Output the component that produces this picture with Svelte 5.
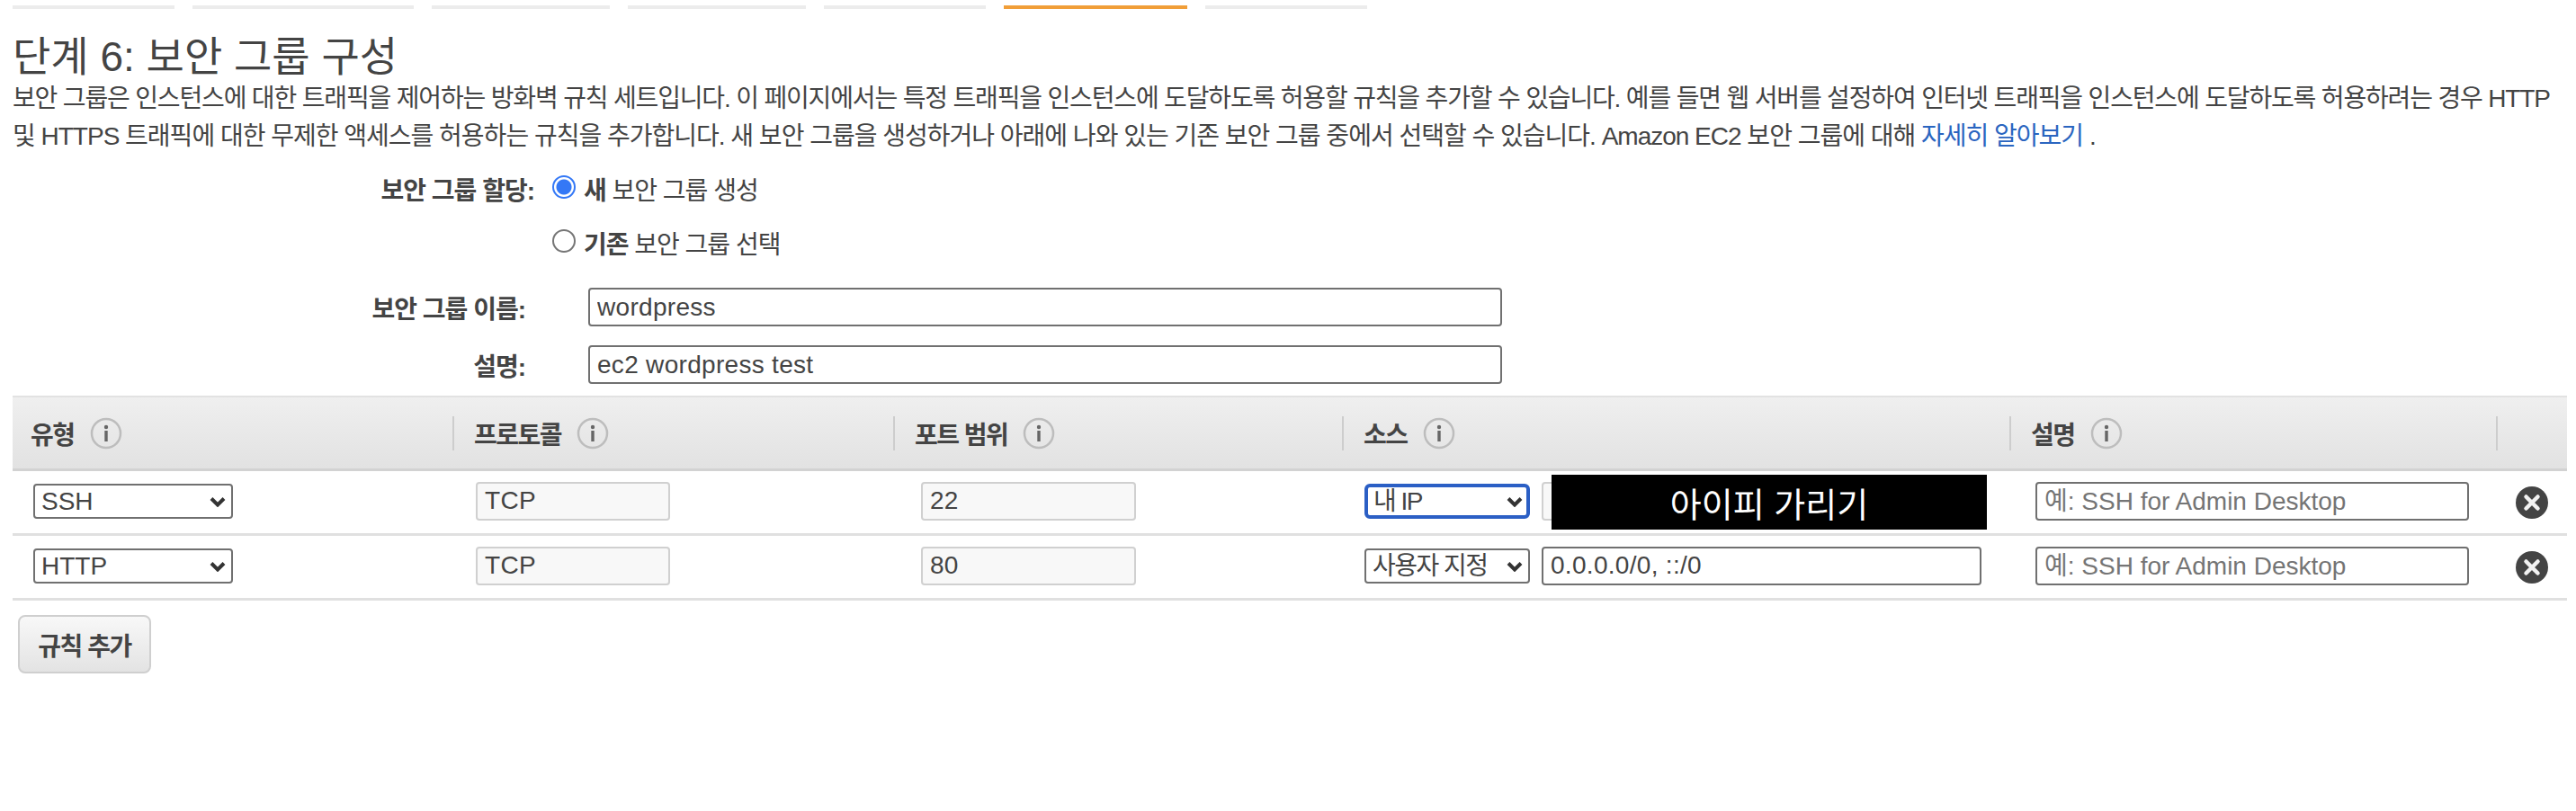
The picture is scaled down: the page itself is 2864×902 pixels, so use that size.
<script>
const steps = [
  { width: 180 }, { width: 246 }, { width: 198 }, { width: 198 },
  { width: 180 }, { width: 204, active: true }, { width: 180 }
];
const columns = ["유형", "프로토콜", "포트 범위", "소스", "설명"];
const rules = [
  { type: "SSH", port: "22", source: "내 IP", focused: true, hidden: true, cidr: "1" },
  { type: "HTTP", port: "80", source: "사용자 지정", cidr: "0.0.0.0/0, ::/0" }
];
const types = ["SSH", "HTTP", "HTTPS"];
const sources = ["사용자 지정", "내 IP", "위치 무관"];
</script>

<main class="page">
  <div class="steps">
    {#each steps as step}
      <span class="step {step.active ? 'step--active' : ''}" style="width: {step.width}px"></span>
    {/each}
  </div>

  <h1>단계 6: 보안 그룹 구성</h1>
  <p class="intro">
    <span class="intro-first">보안 그룹은 인스턴스에 대한 트래픽을 제어하는 방화벽 규칙 세트입니다. 이 페이지에서는 특정 트래픽을 인스턴스에 도달하도록 허용할 규칙을 추가할 수 있습니다. 예를 들면 웹 서버를 설정하여 인터넷 트래픽을 인스턴스에 도달하도록 허용하려는 경우 HTTP</span><br />
    및 HTTPS 트래픽에 대한 무제한 액세스를 허용하는 규칙을 추가합니다. 새 보안 그룹을 생성하거나 아래에 나와 있는 기존 보안 그룹 중에서 선택할 수 있습니다. Amazon EC2 보안 그룹에 대해 <a href="#learn">자세히 알아보기</a> .
  </p>

  <div class="assign">
    <span class="label">보안 그룹 할당:</span>
    <label class="choice"><input type="radio" name="sg" checked /><span><b>새</b> 보안 그룹 생성</span></label>
    <span></span>
    <label class="choice"><input type="radio" name="sg" /><span><b>기존</b> 보안 그룹 선택</span></label>
  </div>

  <div class="fields">
    <span class="label">보안 그룹 이름:</span>
    <input class="text" value="wordpress" />
    <span class="label">설명:</span>
    <input class="text" value="ec2 wordpress test" />
  </div>

  <div class="table">
    <div class="row row--head">
      {#each columns as name, idx}
        <div class="th">
          <div class="th-inner {idx === 0 ? 'th-inner--first' : ''}">
            <span>{name}</span>
            <svg class="info" viewBox="0 0 36 36" width="36" height="36" aria-hidden="true">
              <circle cx="18" cy="18" r="16" fill="none" stroke="#bdbdbd" stroke-width="2.500" />
              <circle cx="18" cy="11" r="2.200" fill="#666" />
              <rect x="16.300" y="15" width="3.400" height="12" fill="#666" />
            </svg>
          </div>
        </div>
      {/each}
      <div class="th"><div class="th-inner"></div></div>
    </div>

    {#each rules as rule}
      <div class="row">
        <div class="td c-type">
          <span class="select-wrap select-wrap--type">
            <select class="select" value={rule.type}>
              {#each types as t}<option>{t}</option>{/each}
            </select>
            <svg class="chevron" viewBox="0 0 18 12" width="18" height="12" aria-hidden="true"><path d="M2 2.5l7 7 7-7" fill="none" stroke="#333" stroke-width="4" /></svg>
          </span>
        </div>
        <div class="td c-proto"><input class="text text--off text--proto" value="TCP" readonly /></div>
        <div class="td c-port"><input class="text text--off text--port" value={rule.port} readonly /></div>
        <div class="td c-source">
          <span class="select-wrap select-wrap--source">
            <select class="select select--ko {rule.focused ? 'select--focus' : ''}" value={rule.source}>
              {#each sources as s}<option>{s}</option>{/each}
            </select>
            <svg class="chevron" viewBox="0 0 18 12" width="18" height="12" aria-hidden="true"><path d="M2 2.5l7 7 7-7" fill="none" stroke="#333" stroke-width="4" /></svg>
          </span>
          <input class="text text--cidr {rule.hidden ? 'text--off' : ''}" value={rule.cidr} />
          {#if rule.hidden}
            <div class="redact">아이피 가리기</div>
          {/if}
        </div>
        <div class="td c-desc"><input class="text text--desc" placeholder="예: SSH for Admin Desktop" /></div>
        <div class="td c-remove">
          <svg viewBox="0 0 36 36" width="36" height="36" aria-hidden="true">
            <circle cx="18" cy="18" r="18" fill="#444" />
            <path d="M11.5 11.5l13 13M24.500 11.500l-13 13" stroke="#f2f2f2" stroke-width="4.500" stroke-linecap="round" />
          </svg>
        </div>
      </div>
    {/each}
  </div>

  <button class="add">규칙 추가</button>
</main>

<style>
:global(body) {
  margin: 0;
  background: #fff;
}

.page {
  width: 2864px;
  height: 902px;
  padding: 6px 10px 0 14px;
  box-sizing: border-box;
  font-family: "Liberation Sans", "Noto Sans CJK KR", sans-serif;
  font-size: 28px;
  letter-spacing: -1px;
  color: #444;
}

.steps {
  display: flex;
  gap: 20px;
}

.step {
  height: 4px;
  background: #ececec;
}

.step--active {
  background: #f19e38;
}

h1 {
  margin: 32px 0 5px;
  font-size: 46px;
  line-height: 42px;
  font-weight: 400;
  letter-spacing: 0;
  color: #444;
}

.intro {
  margin: 0;
  font-size: 28px;
  line-height: 42px;
  white-space: nowrap;
}

.intro-first {
  letter-spacing: -1.16px;
}

.intro a {
  color: #2a65c0;
  text-decoration: none;
}

.label {
  font-weight: 700;
  text-align: right;
}

.assign {
  display: grid;
  grid-template-columns: 580px auto;
  grid-auto-rows: 60px;
  column-gap: 20px;
  margin-top: 7px;
  align-items: center;
  justify-content: start;
}

.choice {
  display: flex;
  align-items: center;
  gap: 9px;
}

.choice input {
  appearance: none;
  width: 26px;
  height: 26px;
  margin: 0 0 4px;
  border: 2px solid #767676;
  border-radius: 50%;
  background: #fff;
  box-sizing: border-box;
}

.choice input:checked {
  border-color: #3478f6;
  background: radial-gradient(circle, #3478f6 0 8px, #fff 9px);
}

.fields {
  display: grid;
  grid-template-columns: 570px 1016px;
  column-gap: 70px;
  row-gap: 21px;
  margin-top: 20px;
  align-items: center;
}

.text {
  height: 43px;
  padding: 0 8px;
  box-sizing: border-box;
  border: 2px solid #707070;
  border-radius: 4px;
  background: #fff;
  color: #444;
  font: inherit;
  letter-spacing: 0.3px;
  outline: none;
}

.text--off {
  background: #f8f8f8;
  border-color: #d0d0d0;
}

.text::placeholder {
  color: #757575;
  opacity: 1;
  letter-spacing: 0;
}

.text--proto { width: 216px; }
.text--port { width: 239px; }
.text--cidr { width: 489px; }
.text--desc { width: 482px; padding-top: 2px; }

.table {
  margin-top: 13px;
}

.row {
  display: grid;
  grid-template-columns: 489px 490px 499px 742px 541px 79px;
  height: 72px;
  padding-bottom: 3px;
  box-sizing: border-box;
  border-bottom: 3px solid #e0e0e0;
  align-items: center;
}

.row--head {
  height: 84px;
  padding-bottom: 0;
  background: linear-gradient(#efefef, #e2e2e2);
  border-top: 2px solid #e2e2e2;
  border-bottom: 3px solid #d2d2d2;
}

.th-inner {
  display: flex;
  align-items: center;
  gap: 17px;
  height: 38px;
  padding-left: 22px;
  border-left: 2px solid #cdcdcd;
  font-weight: 700;
  letter-spacing: -1.5px;
}

.th-inner--first {
  padding-left: 20px;
  border-left: none;
}

.info {
  flex: none;
}

.td {
  display: flex;
  align-items: center;
}

.c-type { padding-left: 23px; }
.c-proto { padding-left: 26px; }
.c-port { padding-left: 31px; }
.c-source { padding-left: 25px; gap: 13px; position: relative; }
.c-desc { padding-left: 29px; }
.c-remove { padding-left: 22px; }
.c-remove svg { margin-top: 4px; }

.select-wrap {
  position: relative;
  display: block;
  height: 39px;
}

.select-wrap--type { width: 222px; }
.select-wrap--source { width: 184px; }

.select {
  appearance: none;
  display: block;
  width: 100%;
  height: 100%;
  padding: 0 0 0 7px;
  box-sizing: border-box;
  border: 2px solid #707070;
  border-radius: 4px;
  background: #fff;
  color: #444;
  font: inherit;
  letter-spacing: 0;
  outline: none;
}

.select--ko {
  letter-spacing: -1.5px;
}

.select--focus {
  border: 4px solid #2b5fc5;
  padding-left: 6px;
  border-radius: 6px;
}

.chevron {
  position: absolute;
  right: 8px;
  top: 14px;
  pointer-events: none;
}

.redact {
  position: absolute;
  left: 233px;
  top: -8px;
  width: 484px;
  height: 61px;
  background: #000;
  color: #fff;
  font-size: 38px;
  letter-spacing: 0;
  display: flex;
  align-items: center;
  justify-content: center;
}

.add {
  display: block;
  width: 148px;
  height: 65px;
  margin: 16px 0 0 6px;
  padding: 0;
  border: 2px solid #cfcfcf;
  border-radius: 8px;
  background: linear-gradient(#f8f8f8, #e3e3e3);
  color: #444;
  font: inherit;
  font-size: 28px;
  font-weight: 700;
  letter-spacing: -1.5px;
}
</style>
